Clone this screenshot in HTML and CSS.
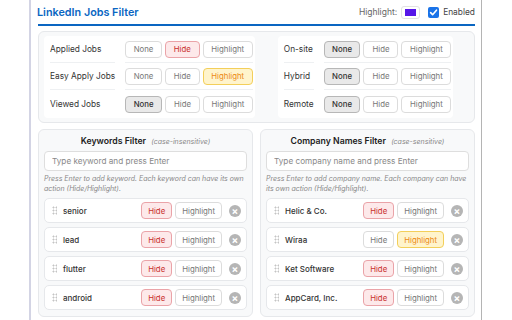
FILE: index.html
```html
<!DOCTYPE html>
<html lang="en">
<head>
    <meta charset="UTF-8">
    <title>LinkedIn Jobs Filter</title>
    <link rel="stylesheet" href="styles.css">
</head>
<body>
    <div class="popup">
        <div class="header">
            <h1>LinkedIn Jobs Filter</h1>
            <div class="header-controls">
                <span class="color-label">Highlight:</span>
                <span class="color-swatch"><span class="color-fill"></span></span>
                <label class="enabled">
                    <span class="checkbox">
                        <svg width="9" height="9" viewBox="0 0 10 10"><path d="M1.8 5.2 L4 7.4 L8.3 2.4" fill="none" stroke="#fff" stroke-width="1.8" stroke-linecap="round" stroke-linejoin="round"/></svg>
                    </span>
                    Enabled
                </label>
            </div>
        </div>

        <div class="panel status-panel">
            <div class="status-card">
                <div class="status-row">
                    <span class="status-label">Applied Jobs</span>
                    <div class="btn-group"><span class="btn">None</span><span class="btn hide">Hide</span><span class="btn">Highlight</span></div>
                </div>
                <div class="status-row">
                    <span class="status-label">Easy Apply Jobs</span>
                    <div class="btn-group"><span class="btn">None</span><span class="btn">Hide</span><span class="btn highlight">Highlight</span></div>
                </div>
                <div class="status-row">
                    <span class="status-label">Viewed Jobs</span>
                    <div class="btn-group"><span class="btn none">None</span><span class="btn">Hide</span><span class="btn">Highlight</span></div>
                </div>
            </div>
            <div class="status-card">
                <div class="status-row">
                    <span class="status-label">On-site</span>
                    <div class="btn-group"><span class="btn none">None</span><span class="btn">Hide</span><span class="btn">Highlight</span></div>
                </div>
                <div class="status-row">
                    <span class="status-label">Hybrid</span>
                    <div class="btn-group"><span class="btn none">None</span><span class="btn">Hide</span><span class="btn">Highlight</span></div>
                </div>
                <div class="status-row">
                    <span class="status-label">Remote</span>
                    <div class="btn-group"><span class="btn none">None</span><span class="btn">Hide</span><span class="btn">Highlight</span></div>
                </div>
            </div>
        </div>

        <div class="filters">
            <div class="panel filter-panel">
                <h2>Keywords Filter <small>(case-insensitive)</small></h2>
                <input type="text" class="filter-input" placeholder="Type keyword and press Enter">
                <p class="help">Press Enter to add keyword. Each keyword can have its own action (Hide/Highlight).</p>
                <ul class="item-list">
                    <li class="item"><span class="grip"></span><span class="item-name">senior</span><span class="btn hide">Hide</span><span class="btn">Highlight</span><span class="remove">&times;</span></li>
                    <li class="item"><span class="grip"></span><span class="item-name">lead</span><span class="btn hide">Hide</span><span class="btn">Highlight</span><span class="remove">&times;</span></li>
                    <li class="item"><span class="grip"></span><span class="item-name">flutter</span><span class="btn hide">Hide</span><span class="btn">Highlight</span><span class="remove">&times;</span></li>
                    <li class="item"><span class="grip"></span><span class="item-name">android</span><span class="btn hide">Hide</span><span class="btn">Highlight</span><span class="remove">&times;</span></li>
                </ul>
            </div>
            <div class="panel filter-panel">
                <h2>Company Names Filter <small>(case-sensitive)</small></h2>
                <input type="text" class="filter-input" placeholder="Type company name and press Enter">
                <p class="help">Press Enter to add company name. Each company can have its own action (Hide/Highlight).</p>
                <ul class="item-list">
                    <li class="item"><span class="grip"></span><span class="item-name">Helic &amp; Co.</span><span class="btn hide">Hide</span><span class="btn">Highlight</span><span class="remove">&times;</span></li>
                    <li class="item"><span class="grip"></span><span class="item-name">Wiraa</span><span class="btn">Hide</span><span class="btn highlight">Highlight</span><span class="remove">&times;</span></li>
                    <li class="item"><span class="grip"></span><span class="item-name">Ket Software</span><span class="btn hide">Hide</span><span class="btn">Highlight</span><span class="remove">&times;</span></li>
                    <li class="item"><span class="grip"></span><span class="item-name">AppCard, Inc.</span><span class="btn hide">Hide</span><span class="btn">Highlight</span><span class="remove">&times;</span></li>
                </ul>
            </div>
        </div>
    </div>
</body>
</html>
```

FILE: styles.css
```css
body {
    margin: 0;
    background: #fff;
    font-family: Inter, "Liberation Sans", sans-serif;
    color: #333;
}
.popup {
    width: 453px;
    height: 320px;
    margin: 0 0 0 29px;
    padding: 0 6px 0 7px;
    box-sizing: border-box;
    border-left: 2px solid #d3d4e4;
    border-right: 1px solid #b4b4b4;
    overflow: hidden;
}
.header {
    display: flex;
    justify-content: space-between;
    align-items: center;
    height: 26px;
    box-sizing: border-box;
    border-bottom: 2px solid #0a66c2;
}
h1 {
    margin: 0 0 0 -1px;
    font-size: 10.8px;
    font-weight: 600;
    color: #0a66c2;
}
.header-controls {
    display: flex;
    align-items: center;
    font-size: 8.5px;
}
.color-label {
    color: #666;
    margin-right: 4px;
}
.color-swatch {
    width: 19px;
    height: 13px;
    border: 1px solid #e2e2e2;
    border-radius: 3px;
    box-sizing: border-box;
    padding: 2px 3px;
    background: #fff;
    margin-right: 8px;
}
.color-fill {
    display: block;
    height: 100%;
    background: #5616e8;
}
.enabled {
    display: flex;
    align-items: center;
    font-size: 8.4px;
    color: #444;
}
.checkbox {
    width: 11px;
    height: 11px;
    border-radius: 2px;
    background: #1a73e8;
    display: flex;
    align-items: center;
    justify-content: center;
    margin-right: 4px;
}
.panel {
    background: #f8f9fa;
    border: 1px solid #e6e8eb;
    border-radius: 6px;
    box-sizing: border-box;
}
.status-panel {
    margin-top: 5px;
    display: flex;
    gap: 23px;
    padding: 4px 5px;
    height: 92px;
}
.status-card {
    flex: none;
    background: #fff;
    border-radius: 4px;
    display: grid;
    grid-template-columns: auto auto;
    column-gap: 10px;
    padding: 0 2px 0 6px;
}
.status-row {
    display: contents;
}
.status-row > * {
    height: 27px;
    box-sizing: border-box;
    display: flex;
    align-items: center;
    border-bottom: 1px solid #eef0f2;
    white-space: nowrap;
}
.status-row:last-child > * {
    border-bottom: none;
}
.status-label {
    font-size: 8.3px;
    color: #333;
}
.btn-group {
    gap: 3px;
}
.btn {
    display: inline-flex;
    align-items: center;
    justify-content: center;
    height: 17px;
    padding: 0 6px;
    box-sizing: border-box;
    border: 1px solid #dcdcdc;
    border-radius: 4px;
    background: #fff;
    color: #777;
    font-size: 7.8px;
    white-space: nowrap;
}
.btn-group .btn {
    min-width: 35px;
    padding: 0 7.5px;
}
.btn.hide {
    background: #fde9ea;
    border-color: #eaa3a8;
    color: #c9302c;
}
.btn.highlight {
    background: #fff4cc;
    border-color: #f3cf5a;
    color: #ec8a15;
}
.btn.none {
    background: #e9e9e9;
    border-color: #b7b7b7;
    color: #333;
    font-weight: 500;
}
.filters {
    display: flex;
    gap: 7px;
    margin-top: 6px;
}
.filter-panel {
    flex: 1;
    height: 188px;
    padding: 4px 5px 0;
}
h2 {
    margin: 0 0 2px;
    text-align: center;
    font-size: 8.7px;
    font-weight: 600;
    color: #222;
    line-height: 14px;
}
h2 small {
    font-size: 7px;
    font-weight: 400;
    font-style: italic;
    color: #888;
    margin-left: 3px;
}
.filter-input {
    display: block;
    width: 100%;
    height: 20px;
    box-sizing: border-box;
    border: 1px solid #dedede;
    border-radius: 4px;
    padding: 0 7px;
    font-family: inherit;
    font-size: 8.2px;
    background: #fff;
}
.filter-input::placeholder {
    color: #888;
}
.help {
    margin: 3px 0 5px;
    font-size: 7px;
    line-height: 9.5px;
    font-style: italic;
    color: #888;
}
.item-list {
    list-style: none;
    margin: 0;
    padding: 0;
    display: flex;
    flex-direction: column;
    gap: 4px;
}
.item {
    display: flex;
    align-items: center;
    height: 25px;
    box-sizing: border-box;
    background: #fff;
    border: 1px solid #e6e8eb;
    border-radius: 5px;
    padding: 0 5px 0 7px;
    gap: 3px;
}
.grip {
    width: 5px;
    height: 9px;
    background-image: radial-gradient(circle, #c4c4c4 0.9px, transparent 1.1px);
    background-size: 3px 3px;
    margin-right: 3px;
}
.item-name {
    flex: 1;
    font-size: 8px;
    font-weight: 500;
    color: #333;
}
.item .btn.hide {
    min-width: 31px;
}
.remove {
    width: 12px;
    height: 12px;
    border-radius: 50%;
    background: #b5b5b5;
    color: #fff;
    font-size: 10px;
    font-weight: 700;
    line-height: 12px;
    text-align: center;
    margin-left: 4px;
}
```
